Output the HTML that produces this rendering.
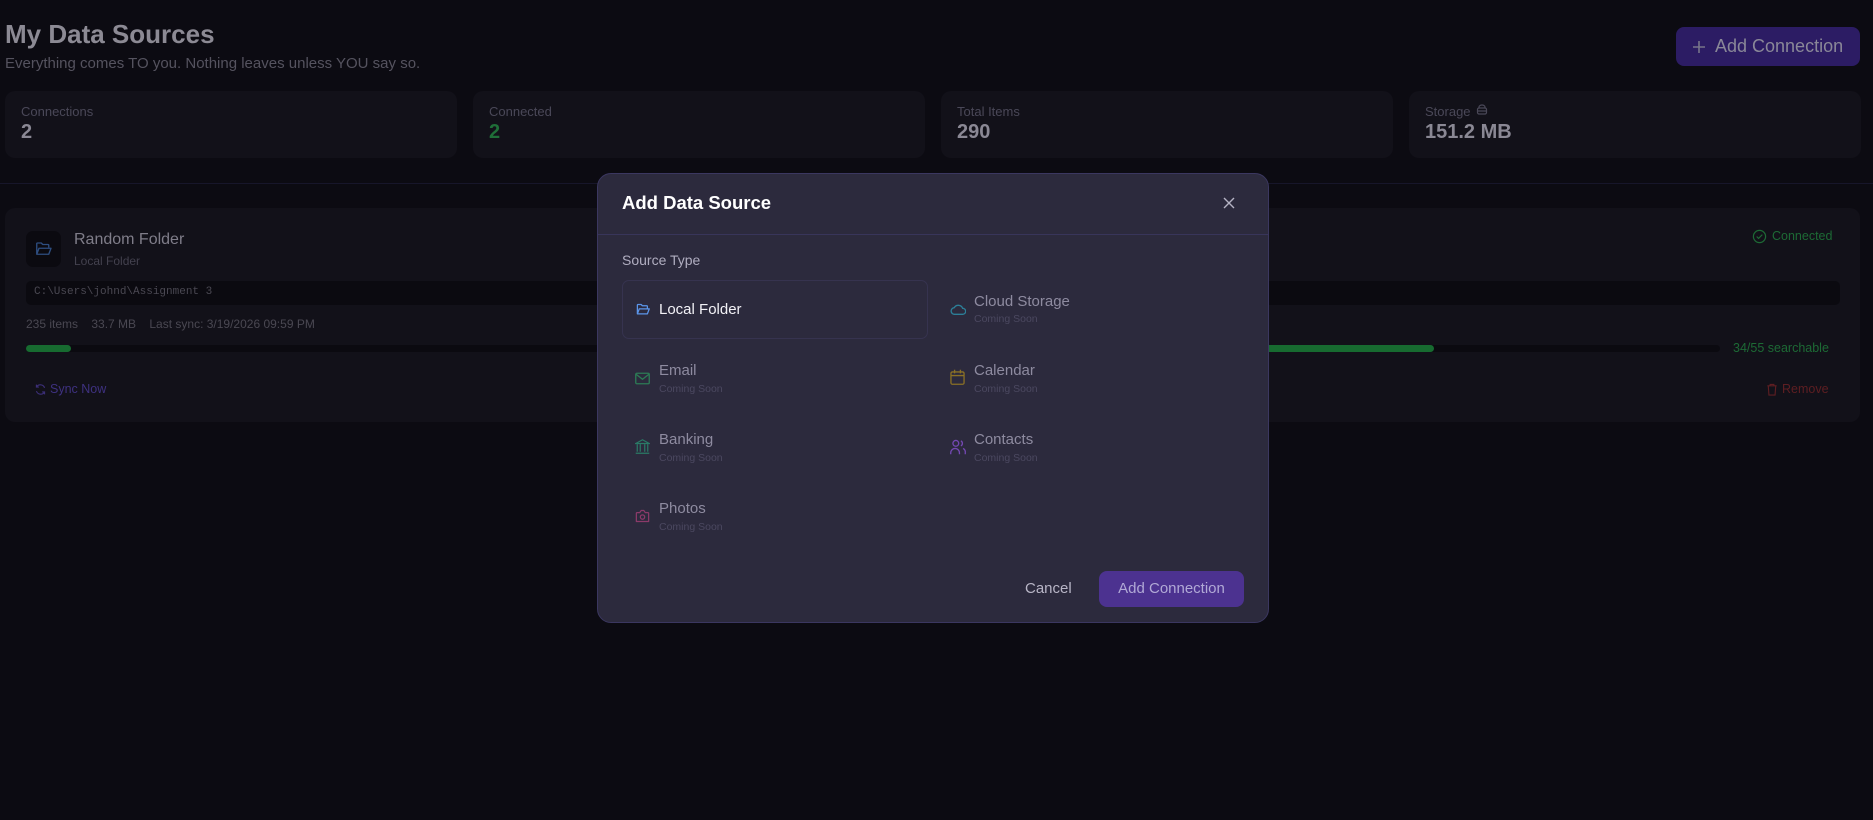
<!DOCTYPE html>
<html><head><meta charset="utf-8">
<style>
*{margin:0;padding:0;box-sizing:border-box}
body{width:1873px;height:820px;background:#0c0b12;font-family:"Liberation Sans",sans-serif;position:relative;overflow:hidden}
.a{position:absolute;white-space:nowrap}
.card{position:absolute;background:#121119;border-radius:10px}
.lbl{font-size:13px;color:#4a4858}
.val{font-size:20px;font-weight:bold;color:#8a8894}
svg{position:absolute}
.opt .n{position:absolute;font-size:15px;color:#8e8ba0}
.opt .c{position:absolute;font-size:10.5px;color:#4b4860}
</style></head><body>
<div class="a" style="left:5px;top:19px;font-size:26px;font-weight:bold;color:#8c8a94">My Data Sources</div>
<div class="a" style="left:5px;top:55px;font-size:15px;color:#55535f">Everything comes TO you. Nothing leaves unless YOU say so.</div>
<div class="a" style="left:1676px;top:27px;width:184px;height:39px;background:#2c1c64;border-radius:8px"></div>
<svg style="left:1691px;top:39px" width="16" height="16" viewBox="0 0 16 16"><path d="M8 2v12M2 8h12" stroke="#77758a" stroke-width="1.6"/></svg>
<div class="a" style="left:1715px;top:36px;font-size:18px;color:#8a8898">Add Connection</div>

<div class="card" style="left:5px;top:91px;width:452px;height:67px"></div>
<div class="card" style="left:473px;top:91px;width:452px;height:67px"></div>
<div class="card" style="left:941px;top:91px;width:452px;height:67px"></div>
<div class="card" style="left:1409px;top:91px;width:452px;height:67px"></div>
<div class="a lbl" style="left:21px;top:104px">Connections</div>
<div class="a val" style="left:21px;top:121px">2</div>
<div class="a lbl" style="left:489px;top:104px">Connected</div>
<div class="a val" style="left:489px;top:121px;color:#1f6e38">2</div>
<div class="a lbl" style="left:957px;top:104px">Total Items</div>
<div class="a val" style="left:957px;top:121px">290</div>
<div class="a lbl" style="left:1425px;top:104px">Storage</div>
<svg style="left:1476px;top:104px" width="12" height="12" viewBox="0 0 12 12"><rect x="1.5" y="4" width="9" height="6" rx="1.5" fill="none" stroke="#4a4858" stroke-width="1.2"/><path d="M3 4V3a3 2 0 0 1 6 0v1M1.5 7h9" fill="none" stroke="#4a4858" stroke-width="1.2"/></svg>
<div class="a val" style="left:1425px;top:121px">151.2 MB</div>
<div class="a" style="left:0;top:183px;width:1873px;height:1px;background:#17162a"></div>

<div class="card" style="left:5px;top:208px;width:1855px;height:214px"></div>
<div class="a" style="left:26px;top:231px;width:35px;height:36px;background:#0b0a10;border-radius:7px"></div>
<svg style="left:34px;top:240px" width="19" height="18" viewBox="0 0 24 24"><path d="M3 19V5a1 1 0 0 1 1-1h5l2 2h7a1 1 0 0 1 1 1v3M3 19l3-8h16l-3 8z" fill="none" stroke="#2e4e80" stroke-width="1.8" stroke-linejoin="round"/></svg>
<div class="a" style="left:74px;top:231px;font-size:16px;color:#7f7d89">Random Folder</div>
<div class="a" style="left:74px;top:254px;font-size:12px;color:#43414e">Local Folder</div>
<div class="a" style="left:26px;top:281px;width:1814px;height:24px;background:#0b0a10;border-radius:5px"></div>
<div class="a" style="left:34px;top:286px;font-family:'Liberation Mono',monospace;font-size:11px;color:#4a4852">C:\Users\johnd\Assignment 3</div>
<div class="a" style="left:26px;top:317px;font-size:12px;color:#4a4852">235 items&nbsp;&nbsp;&nbsp;&nbsp;33.7 MB&nbsp;&nbsp;&nbsp;&nbsp;Last sync: 3/19/2026 09:59 PM</div>
<div class="a" style="left:26px;top:345px;width:1694px;height:7px;background:#0b0a10;border-radius:4px"></div>
<div class="a" style="left:26px;top:345px;width:45px;height:7px;background:#176b30;border-radius:4px"></div>
<div class="a" style="left:1000px;top:345px;width:434px;height:7px;background:#176b30;border-radius:4px"></div>
<div class="a" style="left:1733px;top:341px;font-size:12.5px;color:#1d6a35">34/55 searchable</div>
<svg style="left:1752px;top:229px" width="15" height="15" viewBox="0 0 16 16"><circle cx="8" cy="8" r="6.5" fill="none" stroke="#1d6a35" stroke-width="1.3"/><path d="M5 8l2 2 4-4" fill="none" stroke="#1d6a35" stroke-width="1.3"/></svg>
<div class="a" style="left:1772px;top:229px;font-size:12.5px;color:#1d6a35">Connected</div>
<svg style="left:34px;top:383px" width="13" height="13" viewBox="0 0 16 16"><path d="M13 6a5.5 5.5 0 0 0-10-1M3 10a5.5 5.5 0 0 0 10 1M3 2v3h3M13 14v-3h-3" fill="none" stroke="#3c2f78" stroke-width="1.4"/></svg>
<div class="a" style="left:50px;top:382px;font-size:12.5px;color:#3e3180">Sync Now</div>
<svg style="left:1766px;top:383px" width="12" height="13" viewBox="0 0 12 14"><path d="M1 3h10M4 3V1.5h4V3M2 3l.7 10h6.6L10 3" fill="none" stroke="#5e1e22" stroke-width="1.2"/></svg>
<div class="a" style="left:1782px;top:382px;font-size:12.5px;color:#5e1e22">Remove</div>

<div class="a" style="left:597px;top:173px;width:672px;height:450px;background:#2c2a3d;border:1px solid #3b3760;border-radius:14px"></div>
<div class="a" style="left:622px;top:192px;font-size:18.5px;font-weight:bold;color:#fff">Add Data Source</div>
<svg style="left:1222px;top:196px" width="14" height="14" viewBox="0 0 14 14"><path d="M2 2l10 10M12 2L2 12" stroke="#b5b3c4" stroke-width="1.4"/></svg>
<div class="a" style="left:598px;top:234px;width:670px;height:1px;background:#38355a"></div>
<div class="a" style="left:622px;top:252px;font-size:14px;color:#b0adc0">Source Type</div>
<div class="a" style="left:622px;top:280px;width:306px;height:59px;border:1px solid #36334f;border-radius:7px"></div>

<svg style="left:635px;top:302px" width="16" height="15" viewBox="0 0 24 24"><path d="M3 19V5a1 1 0 0 1 1-1h5l2 2h7a1 1 0 0 1 1 1v3M3 19l3-8h16l-3 8z" fill="none" stroke="#5b95ea" stroke-width="2" stroke-linejoin="round"/></svg>
<div class="a" style="left:659px;top:301px;font-size:15px;color:#f2f1f6">Local Folder</div>

<div class="opt">
<svg style="left:950px;top:302px" width="16" height="14" viewBox="0 0 24 20"><path d="M7 18a5 5 0 0 1-.6-10A7 7 0 0 1 19 9a4.5 4.5 0 0 1 0 9z" fill="none" stroke="#2c7f98" stroke-width="2"/></svg>
<div class="n" style="left:974px;top:293px">Cloud Storage</div><div class="c" style="left:974px;top:313px">Coming Soon</div>

<svg style="left:635px;top:372px" width="15" height="13" viewBox="0 0 20 16"><rect x="1" y="1" width="18" height="14" rx="1.5" fill="none" stroke="#2c7a55" stroke-width="1.8"/><path d="M1 2l9 7 9-7" fill="none" stroke="#2c7a55" stroke-width="1.8"/></svg>
<div class="n" style="left:659px;top:362px">Email</div><div class="c" style="left:659px;top:383px">Coming Soon</div>

<svg style="left:950px;top:369px" width="15" height="16" viewBox="0 0 20 22"><rect x="1" y="4" width="18" height="17" rx="2" fill="none" stroke="#8a7026" stroke-width="1.8"/><path d="M6 1v5M14 1v5M1 9h18" stroke="#8a7026" stroke-width="1.8"/></svg>
<div class="n" style="left:974px;top:362px">Calendar</div><div class="c" style="left:974px;top:383px">Coming Soon</div>

<svg style="left:635px;top:438px" width="15" height="17" viewBox="0 0 20 22"><path d="M1 7l9-5 9 5zM3 8v10M7 8v10M13 8v10M17 8v10M1 20h18" fill="none" stroke="#2a7a66" stroke-width="1.6"/></svg>
<div class="n" style="left:659px;top:431px">Banking</div><div class="c" style="left:659px;top:452px">Coming Soon</div>

<svg style="left:950px;top:439px" width="16" height="16" viewBox="0 0 22 22"><circle cx="8" cy="6" r="4" fill="none" stroke="#7448b3" stroke-width="1.8"/><path d="M1 21v-2a6 6 0 0 1 12 0v2M15 2.5a4 4 0 0 1 0 7M18 13a6 6 0 0 1 3 6v2" fill="none" stroke="#7448b3" stroke-width="1.8"/></svg>
<div class="n" style="left:974px;top:431px">Contacts</div><div class="c" style="left:974px;top:452px">Coming Soon</div>

<svg style="left:635px;top:509px" width="15" height="14" viewBox="0 0 22 20"><path d="M2 6a1 1 0 0 1 1-1h4l2-3h4l2 3h4a1 1 0 0 1 1 1v12H2z" fill="none" stroke="#8c3a6a" stroke-width="1.8" stroke-linejoin="round"/><circle cx="11" cy="11.5" r="3.2" fill="none" stroke="#8c3a6a" stroke-width="1.8"/></svg>
<div class="n" style="left:659px;top:500px">Photos</div><div class="c" style="left:659px;top:521px">Coming Soon</div>
</div>

<div class="a" style="left:1025px;top:580px;font-size:15px;color:#b8b5c6">Cancel</div>
<div class="a" style="left:1099px;top:571px;width:145px;height:36px;background:#4c3290;border-radius:8px"></div>
<div class="a" style="left:1099px;top:580px;width:145px;text-align:center;font-size:15px;color:#b1a9d6">Add Connection</div>
</body></html>
